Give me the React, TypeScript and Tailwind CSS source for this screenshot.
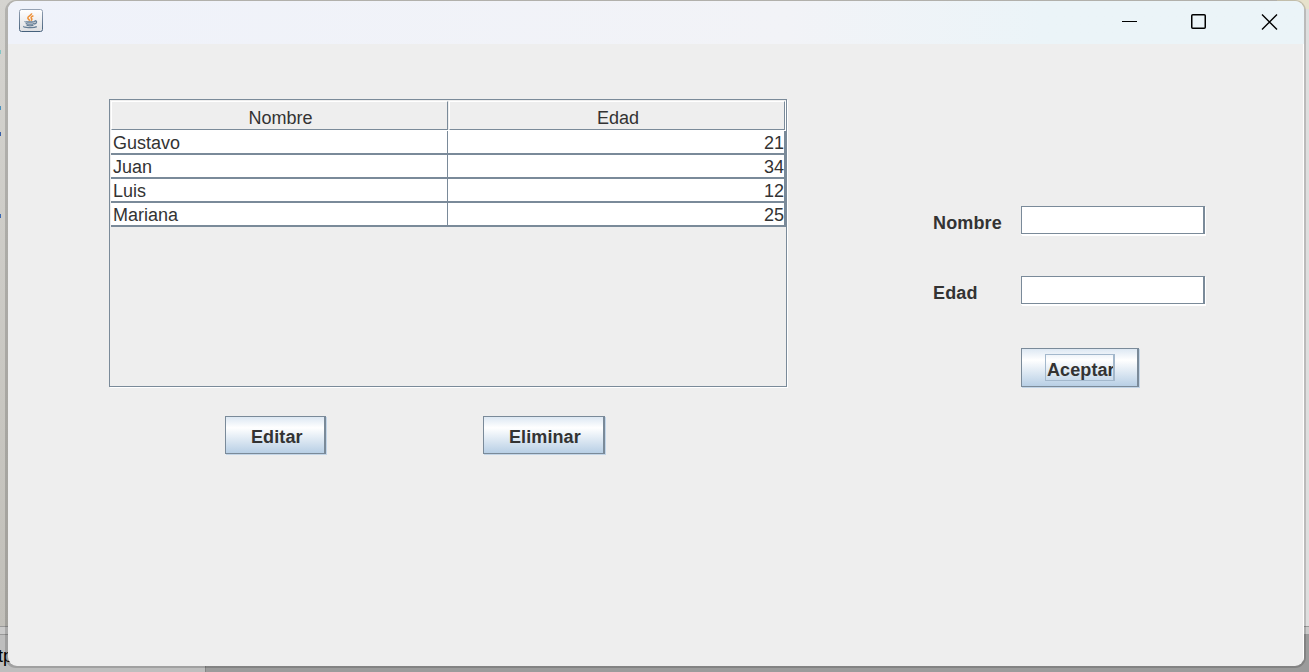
import React from "react";

const people = [
  { nombre: "Gustavo", edad: 21 },
  { nombre: "Juan", edad: 34 },
  { nombre: "Luis", edad: 12 },
  { nombre: "Mariana", edad: 25 },
];

function JavaIcon() {
  return (
    <svg width="24" height="24" viewBox="0 0 24 24" fill="none">
      <defs>
        <linearGradient id="tile" x1="0" y1="0" x2="0" y2="1">
          <stop offset="0" stopColor="#ffffff" />
          <stop offset="1" stopColor="#dedfe2" />
        </linearGradient>
        <linearGradient id="edge" x1="0" y1="0" x2="0" y2="1">
          <stop offset="0" stopColor="#94a1b3" />
          <stop offset="1" stopColor="#46617c" />
        </linearGradient>
      </defs>
      <rect x="0.5" y="0.5" width="23" height="22" rx="2" fill="url(#tile)" stroke="url(#edge)" />
      <path d="M12.6 4.2c.6 1.8-3.8 2.8-3.8 4.8 0 1 1.6 1.6 2 2.8M14.4 6.8c-2.2.8-3 1.8-1.8 2.8.6.6.2 1.4-.6 2" stroke="#ee9138" strokeWidth="1.5" />
      <path d="M6 12.3c-.6 1 9.4.9 10 0M7 14.2c.4 1.3 7.6 1.3 8.2 0M7.6 16c.6 1.1 6.2 1.1 6.8 0M15.6 11.8c2.8-.4 2.6 2.8-.6 3.4M5 17.2c-2 1.4 10 2 12.8.4" stroke="#647d95" strokeWidth="1.3" />
    </svg>
  );
}

function TitleBar() {
  return (
    <header className="flex h-[43px] items-start justify-between bg-linear-to-r from-[#eff2fa] via-[#f2f3f7] via-60% to-[#ebf4f8] to-80% pl-[11px]">
      <div className="pt-2">
        <JavaIcon />
      </div>
      <div className="flex gap-[52px] pt-3 pr-[26px]">
        <svg width="17" height="17" viewBox="0 0 17 17">
          <path d="M1 8.5h15" stroke="#000" />
        </svg>
        <svg width="17" height="17" viewBox="0 0 17 17" fill="none">
          <rect x="1.75" y="1.75" width="13.5" height="13.5" rx="1" stroke="#000" strokeWidth="1.5" />
        </svg>
        <svg width="17" height="17" viewBox="0 0 17 17" className="ml-[2px]">
          <path d="M1 1.5l15 15M16 1.5L1 16.5" stroke="#000" strokeWidth="1.4" />
        </svg>
      </div>
    </header>
  );
}

function PeopleTable() {
  return (
    <div className="h-[288px] w-[678px] border border-[#7a8a99] pl-px shadow-[1px_1px_0_#fff]">
      <div className="flex h-[31px] border-b border-white pt-px text-center leading-[33px]">
        <div className="h-[29px] w-[337px] border-t border-r border-b border-l border-t-white border-r-[#7a8a99] border-b-[#7a8a99] border-l-white pl-[2px]">
          Nombre
        </div>
        <div className="ml-px h-[29px] w-[336px] border-t border-r border-b border-l border-t-white border-r-[#7a8a99] border-b-[#7a8a99] border-l-white pl-[2px]">
          Edad
        </div>
        <div className="w-px bg-white" />
      </div>
      {people.map((p) => (
        <div key={p.nombre} className="flex h-6 border-b-2 border-[#7a8a99] bg-white leading-[25px]">
          <div className="h-[22px] w-[337px] border-r border-[#7a8a99] pl-0.5">{p.nombre}</div>
          <div className="h-[22px] flex-1 border-r-2 border-[#7a8a99] text-right">{p.edad}</div>
        </div>
      ))}
    </div>
  );
}

function MetalButton({ label, size, focused = false }: { label: string; size: string; focused?: boolean }) {
  return (
    <button
      className={`flex items-center border border-r-2 border-[#7a8a99] bg-linear-to-b from-[#dde8f3] via-white via-30% to-[#b8cfe5] font-bold tracking-[0.1px] shadow-[1px_1px_0_#c3d5e7] ${size}`}
    >
      {focused ? (
        <span className="mb-px ml-[23px] h-[27px] w-[70px] overflow-hidden border border-r-2 border-[#a3b8cc] pl-px text-left leading-[31px]">
          {label}
        </span>
      ) : (
        <span className="w-full pt-[4px] pl-[25px] text-left">{label}</span>
      )}
    </button>
  );
}

function Field({ label }: { label: string }) {
  return (
    <label className="flex h-7 w-[272px] font-bold tracking-[0.15px]">
      <span className="w-[88px] leading-[35px]">{label}</span>
      <span className="flex h-[29px] w-[185px] bg-white shadow-[1px_1px_0_#fff]">
        <input className="h-7 w-[184px] border border-r-2 border-[#7a8a99] bg-white outline-none" />
      </span>
    </label>
  );
}

export default function App() {
  return (
    <div className="relative h-[672px] w-[1309px] overflow-hidden bg-[#d3d1cb] font-['Liberation_Sans',Arial,sans-serif] text-[18px] text-[#333]">
      <div className="flex h-full flex-col">
        <div className="flex h-[626px] justify-between">
          <div className="flex w-3 flex-col bg-linear-to-b from-[#d5d4d0] to-[#c1bfb9]">
            <div className="mt-[50px] h-1 w-px bg-[#83c6c6]" />
            <div className="mt-[52px] h-1 w-px bg-[#4b91be]" />
            <div className="mt-[22px] h-1 w-px bg-[#385fa8]" />
            <div className="mt-[78px] h-1 w-px bg-[#3767b3]" />
          </div>
          <div className="w-8 border-t-[9px] border-[#e7e2cc] bg-[#dedede]" />
        </div>
        <div className="h-[9px] border-y border-[#999] bg-[#cacaca]" />
        <div className="flex flex-1">
          <div className="w-[205px] bg-[#bebebe] pt-[9px] leading-6 text-black">
            <span className="-ml-[2px]">tp</span>
          </div>
          <div className="flex-1 border-l border-[#858585] bg-[#9b9b9b]" />
        </div>
      </div>

      <div className="absolute top-0 left-[5px] h-[668px] w-[1301px] rounded-[11px] bg-linear-to-b from-black/16 to-black/16 pt-px pr-[2px] pb-[2px] pl-[3px]">
        <div className="h-[665px] overflow-hidden rounded-[9px] bg-[#eee]">
          <TitleBar />
          <main className="flex h-[622px] border-r border-white pt-[55px] pl-[101px]">
            <section>
              <PeopleTable />
              <div className="flex gap-[157px] pt-[29px] pl-[116px]">
                <MetalButton label="Editar" size="h-[38px] w-[101px]" />
                <MetalButton label="Eliminar" size="h-[38px] w-[122px]" />
              </div>
            </section>
            <form className="flex flex-col pt-[107px] pl-[146px]">
              <Field label="Nombre" />
              <div className="pt-[42px]">
                <Field label="Edad" />
              </div>
              <div className="pt-11 pl-[88px]">
                <MetalButton label="Aceptar" size="h-[39px] w-[118px]" focused />
              </div>
            </form>
          </main>
        </div>
      </div>
    </div>
  );
}
